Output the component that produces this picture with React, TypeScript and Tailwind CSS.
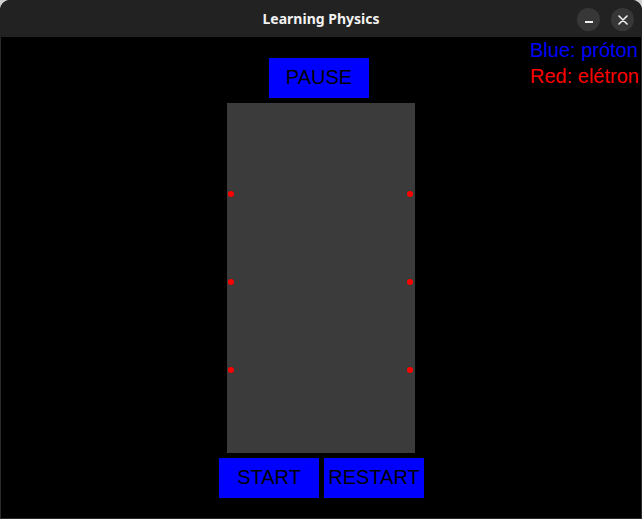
import React from "react";

const dotsLeft = [193, 281, 369];

export default function App() {
  return (
    <div className="w-[642px] h-[519px] bg-[#d0d0d0] overflow-hidden">
      <div className="w-[642px] h-[519px] rounded-t-[10px] overflow-hidden flex flex-col bg-black">
        <div className="h-[37px] shrink-0 bg-[#222222] relative flex items-center justify-center">
          <span
            className="text-[14px] font-bold text-[#f2f2f2]"
            style={{ fontFamily: "'Noto Sans', sans-serif" }}
          >
            Learning Physics
          </span>
          <div className="absolute right-[8px] top-[8px] flex gap-[11px]">
            <div className="w-[23px] h-[23px] rounded-full bg-[#373737] flex items-center justify-center">
              <div className="w-[8px] h-[2px] bg-[#f0f0f0] mt-[5px]" />
            </div>
            <div className="w-[23px] h-[23px] rounded-full bg-[#373737] flex items-center justify-center">
              <svg width="10" height="10" viewBox="0 0 10 10">
                <path d="M1 1 L9 9 M9 1 L1 9" stroke="#f0f0f0" strokeWidth="1.6" strokeLinecap="round" />
              </svg>
            </div>
          </div>
        </div>
        <div
          className="relative flex-1 bg-black border-l border-r border-b border-[#2a2a2a]"
          style={{ fontFamily: "'Liberation Sans', Arial, sans-serif" }}
        >
          <div className="absolute top-0 left-[529px] text-[20px] leading-[26px]">
            <div className="text-[#0000ff]">Blue: próton</div>
            <div className="text-[#ff0000]">Red: elétron</div>
          </div>
          <div className="flex flex-col pt-[21px] pl-[218px]">
            <div className="ml-[50px] w-[100px] h-[40px] pb-[2px] bg-[#0000ff] flex items-center justify-center text-[20px] text-black">
              PAUSE
            </div>
            <div className="relative ml-[8px] mt-[5px] w-[188px] h-[350px] bg-[#3b3b3b]">
              {dotsLeft.map((y) => (
                <React.Fragment key={y}>
                  <div
                    className="absolute w-[6px] h-[6px] rounded-full bg-[#ff0000]"
                    style={{ left: 1, top: y - 103 - 2 }}
                  />
                  <div
                    className="absolute w-[6px] h-[6px] rounded-full bg-[#ff0000]"
                    style={{ left: 180, top: y - 103 - 2 }}
                  />
                </React.Fragment>
              ))}
            </div>
            <div className="flex gap-[5px] mt-[5px]">
              <div className="w-[100px] h-[40px] pb-[2px] bg-[#0000ff] flex items-center justify-center text-[20px] text-black">
                START
              </div>
              <div className="w-[100px] h-[40px] pb-[2px] bg-[#0000ff] flex items-center justify-center text-[20px] text-black">
                RESTART
              </div>
            </div>
          </div>
        </div>
      </div>
    </div>
  );
}
